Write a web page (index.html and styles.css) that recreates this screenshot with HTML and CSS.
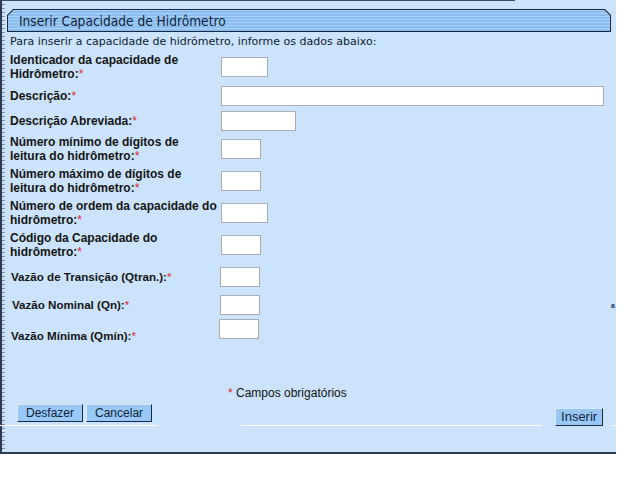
FILE: index.html
```html
<!DOCTYPE html>
<html lang="pt">
<head>
<meta charset="utf-8">
<title>Inserir Capacidade de Hidrômetro</title>
<link rel="stylesheet" href="styles.css">
</head>
<body>
<div class="panel">
  <div class="titlebar"><div class="titlebar-inner">Inserir Capacidade de Hidrômetro</div></div>
  <p class="intro">Para inserir a capacidade de hidrômetro, informe os dados abaixo:</p>
  <div class="form">
    <div class="row r1">
      <label class="lbl">Identicador da capacidade de<br>Hidrômetro:<span class="req">*</span></label>
      <input class="in w47" type="text">
    </div>
    <div class="row r2">
      <label class="lbl">Descrição:<span class="req">*</span></label>
      <input class="in w383" type="text">
    </div>
    <div class="row r3">
      <label class="lbl">Descrição Abreviada:<span class="req">*</span></label>
      <input class="in w75" type="text">
    </div>
    <div class="row r4">
      <label class="lbl">Número mínimo de dígitos de<br>leitura do hidrômetro:<span class="req">*</span></label>
      <input class="in w40" type="text">
    </div>
    <div class="row r5">
      <label class="lbl">Número máximo de dígitos de<br>leitura do hidrômetro:<span class="req">*</span></label>
      <input class="in w40" type="text">
    </div>
    <div class="row r6">
      <label class="lbl">Número de ordem da capacidade do<br>hidrômetro:<span class="req">*</span></label>
      <input class="in w47" type="text">
    </div>
    <div class="row r7">
      <label class="lbl">Código da Capacidade do<br>hidrômetro:<span class="req">*</span></label>
      <input class="in w40" type="text">
    </div>
    <div class="row r8">
      <label class="lbl alt">Vazão de Transição (Qtran.):<span class="req">*</span></label>
      <input class="in w40" type="text">
    </div>
    <div class="row r9">
      <label class="lbl alt pad2">Vazão Nominal (Qn):<span class="req">*</span></label>
      <input class="in w40" type="text">
      <span class="stray">a</span>
    </div>
    <div class="row r10">
      <label class="lbl alt pad1">Vazão Mínima (Qmín):<span class="req">*</span></label>
      <input class="in w40 top" type="text">
    </div>
  </div>
  <div class="legend"><span class="req">*</span> Campos obrigatórios</div>
  <div class="footer">
    <div class="cell cell-a">
      <button class="btn" type="button">Desfazer</button>
      <button class="btn" type="button">Cancelar</button>
    </div>
    <div class="gap-a"></div>
    <div class="cell cell-b"></div>
    <div class="gap-b"></div>
    <button class="btn btn-insert" type="button">Inserir</button>
    <div class="gap-c"></div>
    <div class="cell cell-d"></div>
  </div>
</div>
</body>
</html>
```
FILE: styles.css
```css
html, body {
  margin: 0;
  padding: 0;
  background: #ffffff;
}

.panel {
  box-sizing: border-box;
  width: 616px;
  height: 454px;
  background-color: #cbe4fc;
  background-image:
    linear-gradient(#3b4a62, #3b4a62),
    repeating-linear-gradient(to bottom, #7d8ea8 0 1px, transparent 1px 4px);
  background-size: 513px 1px, 3px 100%;
  background-position: 0 0, 0 0;
  background-repeat: no-repeat;
  border-left: 2px solid #2c3a52;
  border-bottom: 2px solid #2c3a52;
  padding-top: 9px;
  font-family: "Liberation Sans", Arial, sans-serif;
  color: #000;
}

.titlebar {
  margin: 0 5px 0 5px;
  padding: 1px;
  background: #17273f;
  clip-path: polygon(6px 0, calc(100% - 6px) 0, 100% 6px, 100% 100%, 0 100%, 0 6px);
}

.titlebar-inner {
  height: 21px;
  padding-left: 11px;
  background:
    repeating-linear-gradient(to bottom, #a9d0f6 0 1px, #8dbdef 1px 3px);
  clip-path: polygon(5.6px 0, calc(100% - 5.6px) 0, 100% 5.6px, 100% 100%, 0 100%, 0 5.6px);
  font-family: "DejaVu Sans Condensed", "DejaVu Sans", sans-serif;
  font-size: 13.6px;
  line-height: 23px;
  color: #0d1f38;
}

.intro {
  margin: 0;
  padding: 3px 0 0 8px;
  height: 17px;
  font-family: "DejaVu Sans", Verdana, sans-serif;
  font-size: 11px;
  line-height: 14px;
  color: #0b1a30;
}

.form {
  display: flex;
  flex-direction: column;
}

.row {
  display: flex;
  align-items: center;
  padding-left: 8px;
}

.r1 { height: 30px; }
.r2 { height: 28px; }
.r3 { height: 22px; }
.r4 { height: 34px; }
.r5 { height: 30px; }
.r6 { height: 34px; }
.r7 { height: 30px; }
.r8 { height: 34px; }
.r9 { height: 22px; }
.r10 { height: 40px; }

.lbl {
  width: 211px;
  flex: none;
  font-weight: bold;
  font-size: 12px;
  line-height: 14px;
  color: #141414;
}

.lbl.alt {
  font-size: 11.6px;
  padding-left: 1px;
  width: 209px;
}

.lbl.pad2 { padding-left: 2px; width: 208px; }
.lbl.pad1 { padding-left: 1px; width: 208px; }

.req {
  color: #e0242c;
  font-weight: normal;
}

.in {
  box-sizing: border-box;
  height: 20px;
  margin: 0;
  padding: 0 2px;
  border: 1px solid #a6adb6;
  background: #ffffff;
  flex: none;
}

.in.top {
  align-self: flex-start;
  margin-top: 3px;
}

.w40 { width: 40px; }
.w47 { width: 47px; }
.w75 { width: 75px; }
.w383 { width: 383px; }

.stray {
  margin-left: auto;
  margin-right: 1px;
  font-size: 7px;
  font-weight: bold;
  color: #1c2e6a;
}

.legend {
  margin-top: 30px;
  padding-left: 226px;
  font-size: 12px;
  line-height: 14px;
  color: #111;
}

.footer {
  display: flex;
  align-items: flex-start;
  margin-top: 4px;
  margin-left: -2px;
}

.cell {
  box-sizing: border-box;
  border-bottom: 1px solid #ffffff;
}

.cell-a {
  width: 157px;
  display: flex;
  gap: 3px;
  padding-left: 17px;
  padding-bottom: 3px;
}

.gap-a { width: 85px; }
.cell-b { width: 302px; height: 22px; }
.gap-b { width: 13px; }
.gap-c { width: 9px; }
.cell-d { width: 4px; height: 22px; }

.btn {
  box-sizing: border-box;
  height: 18px;
  margin: 0;
  padding: 0 8px;
  background: #99c8f6;
  border: 1px solid #1a2a44;
  border-top-color: #d6e9fb;
  border-left-color: #d6e9fb;
  font-family: "Liberation Sans", Arial, sans-serif;
  font-size: 12px;
  line-height: 16px;
  color: #0f1f36;
}

.btn-insert {
  margin-top: 4px;
  width: 48px;
  padding: 0;
  font-size: 13px;
}
```
